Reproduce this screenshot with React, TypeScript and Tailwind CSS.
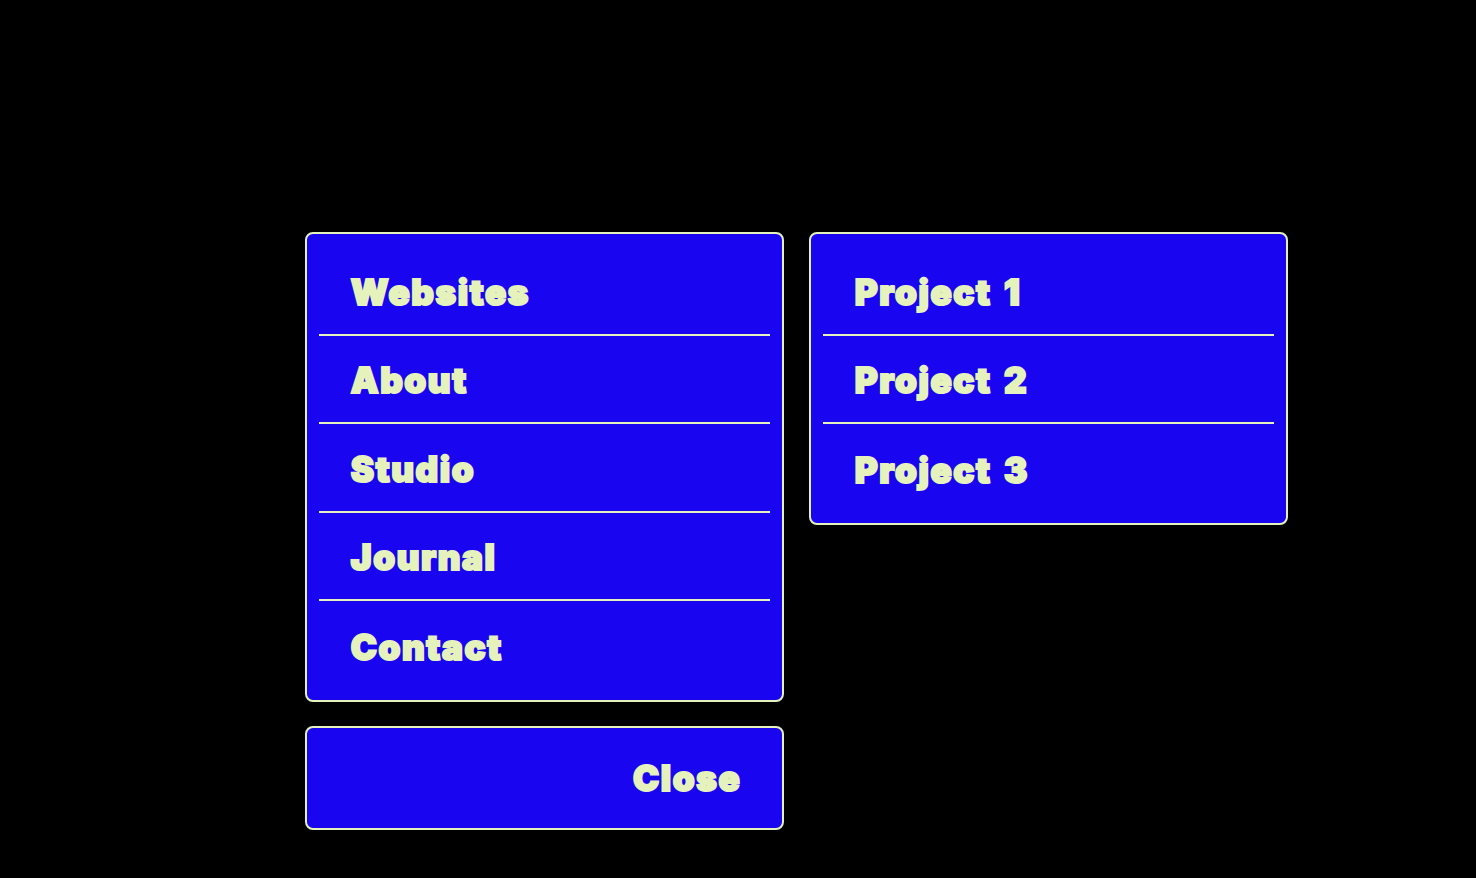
const left = ["Websites", "About", "Studio", "Journal", "Contact"];
const right = ["Project 1", "Project 2", "Project 3"];

function Panel({ items }: { items: string[] }) {
  return (
    <div className="w-[479.5px] rounded-lg border-2 border-[#e6f2bb] bg-[#1905f0] px-3 pt-[13px] pb-[10px]">
      {items.map((t, i) => (
        <div
          key={t}
          className={`flex h-[88.5px] items-center pt-[4px] pl-8 ${i < items.length - 1 ? "border-b-2 border-[#e6f2bb]" : ""}`}
        >
          <span className="text-[35px] leading-none font-black tracking-[1.6px] [word-spacing:4px] text-[#e6f2bb] [-webkit-text-stroke:2px_#e6f2bb]">{t}</span>
        </div>
      ))}
    </div>
  );
}

export default function App() {
  return (
    <div className="flex h-[878px] w-full justify-center bg-black pt-[232px] pl-[117px] font-['Inter',sans-serif]">
      <div className="flex items-start gap-[24.5px]">
        <div className="flex flex-col gap-6">
          <Panel items={left} />
          <div className="flex h-[104px] w-[479.5px] items-center justify-end rounded-lg border-2 border-[#e6f2bb] bg-[#1905f0] pt-[2px] pr-[41px]">
            <span className="text-[35px] leading-none font-black tracking-[1.6px] text-[#e6f2bb] [-webkit-text-stroke:2px_#e6f2bb]">Close</span>
          </div>
        </div>
        <Panel items={right} />
      </div>
    </div>
  );
}
